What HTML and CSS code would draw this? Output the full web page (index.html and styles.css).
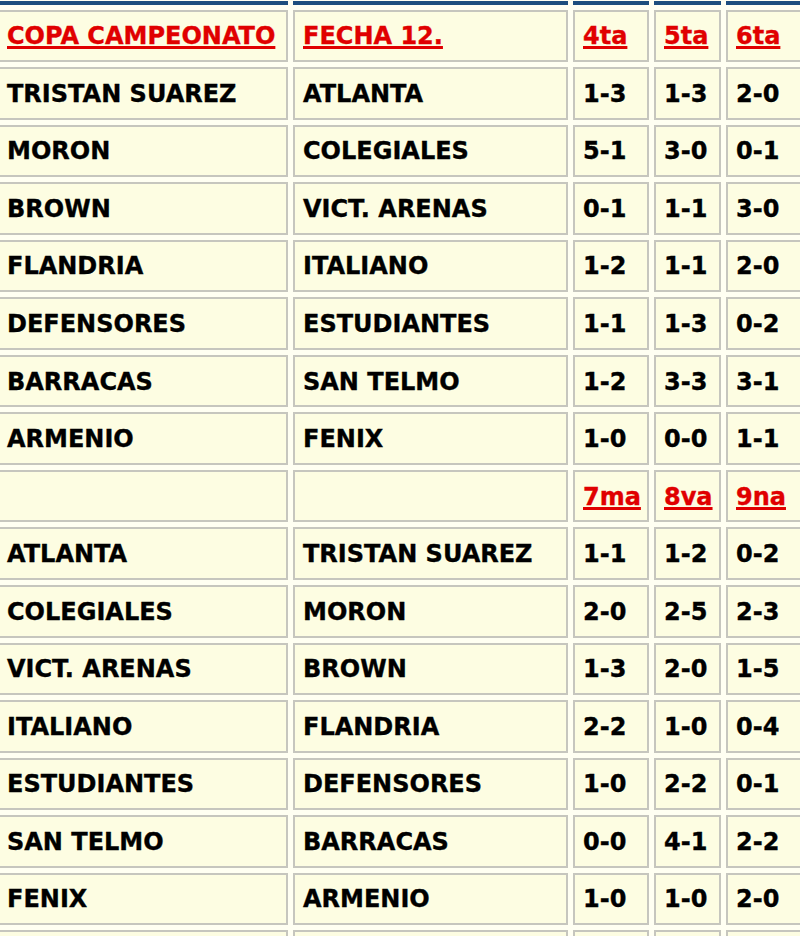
FILE: index.html
```html
<!DOCTYPE html>
<html lang="es">
<head>
<meta charset="utf-8">
<title>Copa Campeonato</title>
<link rel="stylesheet" href="styles.css">
</head>
<body>
<table class="fixture">
  <colgroup>
    <col class="c-home"><col class="c-away"><col class="c-r1"><col class="c-r2"><col class="c-r3">
  </colgroup>
  <tr class="bar"><td></td><td></td><td></td><td></td><td></td></tr>
  <tr>
    <td><a href="#">COPA CAMPEONATO</a></td>
    <td><a href="#">FECHA 12.</a></td>
    <td><a href="#">4ta</a></td>
    <td><a href="#">5ta</a></td>
    <td><a href="#">6ta</a></td>
  </tr>
  <tr><td>TRISTAN SUAREZ</td><td>ATLANTA</td><td>1-3</td><td>1-3</td><td>2-0</td></tr>
  <tr><td>MORON</td><td>COLEGIALES</td><td>5-1</td><td>3-0</td><td>0-1</td></tr>
  <tr><td>BROWN</td><td>VICT. ARENAS</td><td>0-1</td><td>1-1</td><td>3-0</td></tr>
  <tr><td>FLANDRIA</td><td>ITALIANO</td><td>1-2</td><td>1-1</td><td>2-0</td></tr>
  <tr><td>DEFENSORES</td><td>ESTUDIANTES</td><td>1-1</td><td>1-3</td><td>0-2</td></tr>
  <tr><td>BARRACAS</td><td>SAN TELMO</td><td>1-2</td><td>3-3</td><td>3-1</td></tr>
  <tr><td>ARMENIO</td><td>FENIX</td><td>1-0</td><td>0-0</td><td>1-1</td></tr>
  <tr>
    <td></td><td></td>
    <td><a href="#">7ma</a></td>
    <td><a href="#">8va</a></td>
    <td><a href="#">9na</a></td>
  </tr>
  <tr><td>ATLANTA</td><td>TRISTAN SUAREZ</td><td>1-1</td><td>1-2</td><td>0-2</td></tr>
  <tr><td>COLEGIALES</td><td>MORON</td><td>2-0</td><td>2-5</td><td>2-3</td></tr>
  <tr><td>VICT. ARENAS</td><td>BROWN</td><td>1-3</td><td>2-0</td><td>1-5</td></tr>
  <tr><td>ITALIANO</td><td>FLANDRIA</td><td>2-2</td><td>1-0</td><td>0-4</td></tr>
  <tr><td>ESTUDIANTES</td><td>DEFENSORES</td><td>1-0</td><td>2-2</td><td>0-1</td></tr>
  <tr><td>SAN TELMO</td><td>BARRACAS</td><td>0-0</td><td>4-1</td><td>2-2</td></tr>
  <tr><td>FENIX</td><td>ARMENIO</td><td>1-0</td><td>1-0</td><td>2-0</td></tr>
  <tr><td></td><td></td><td></td><td></td><td></td></tr>
</table>
</body>
</html>
```

FILE: styles.css
```css
html, body {
  margin: 0;
  padding: 0;
  background: #fffff2;
}

body {
  overflow: hidden;
}

.fixture {
  border-collapse: separate;
  border-spacing: 5px;
  table-layout: fixed;
  width: 815px;
  margin: -4px 0 0 -8px;
  font-family: "DejaVu Sans", Verdana, sans-serif;
  font-weight: bold;
  font-size: 24px;
  color: #000;
  -webkit-text-stroke: 0.35px currentColor;
}

.c-home { width: 291px; }
.c-away { width: 275px; }
.c-r1 { width: 76px; }
.c-r2 { width: 67px; }
.c-r3 { width: 76px; }

.fixture td {
  box-sizing: border-box;
  height: 52.55px;
  padding: 1px 0 0 8px;
  background: #fdfde2;
  border: 2px solid #c6c6be;
  white-space: nowrap;
  overflow: hidden;
  vertical-align: middle;
  line-height: 1;
}

.fixture tr.bar td {
  height: 3.5px;
  padding: 0;
  border: 0;
  background: #1d4e7e;
}

.fixture a {
  color: #e00000;
  text-decoration: underline;
  text-decoration-thickness: 2.5px;
  text-underline-offset: 2px;
}
```
